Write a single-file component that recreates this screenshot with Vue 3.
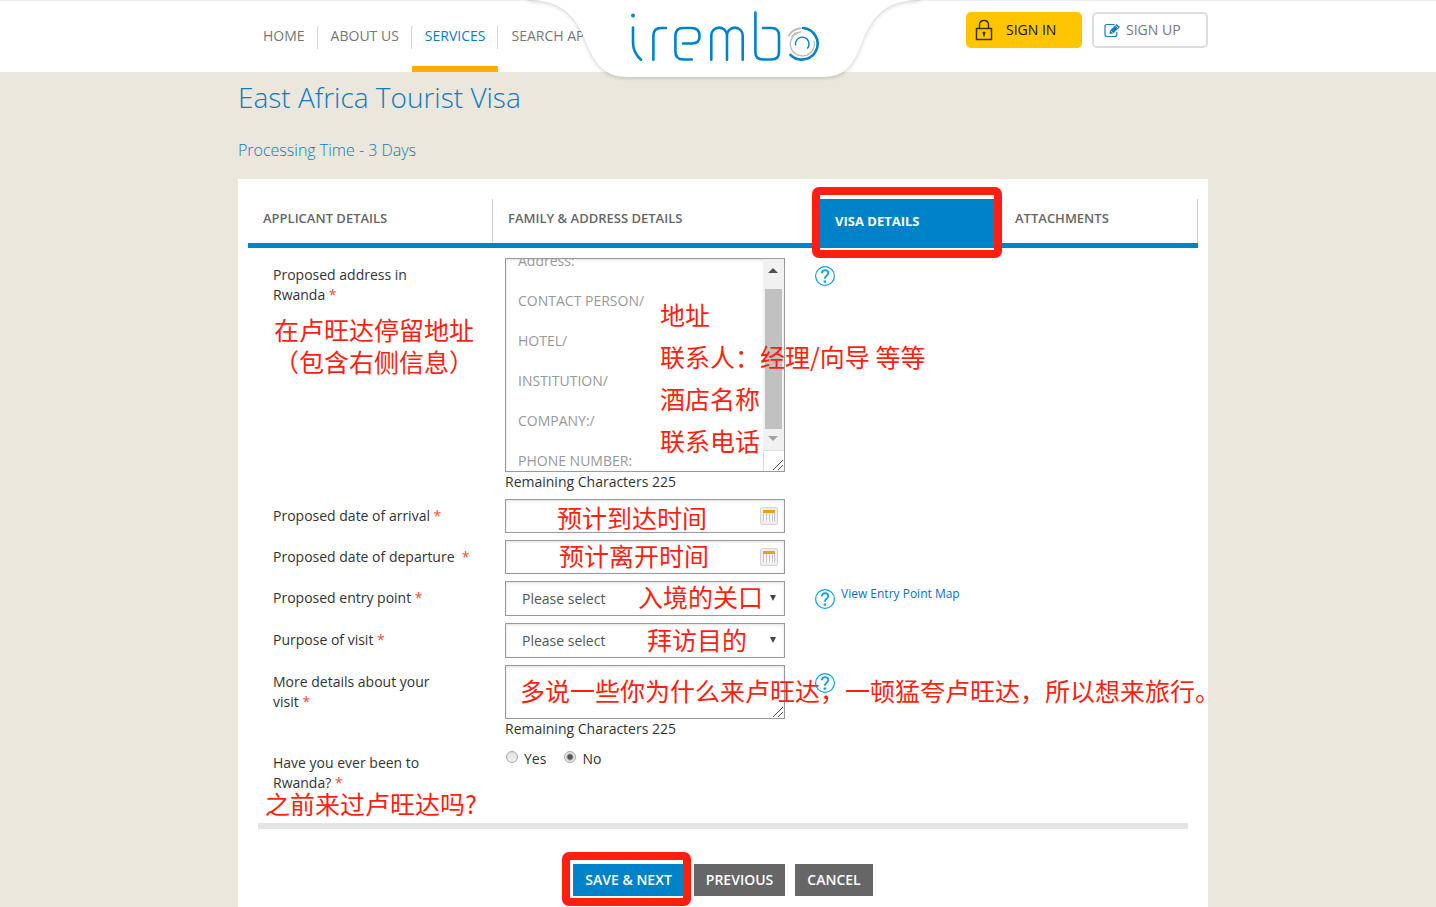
<script setup>
import { onMounted, ref } from 'vue'

const address = ref('Address:\n\nCONTACT PERSON/\n\nHOTEL/\n\nINSTITUTION/\n\nCOMPANY:/\n\nPHONE NUMBER:')
const addressBox = ref(null)
const arrival = ref('')
const departure = ref('')
const entryPoint = ref('')
const purpose = ref('')
const details = ref('')
const visited = ref('no')

onMounted(() => {
  addressBox.value.scrollTop = 14
})
</script>

<template>
  <div class="page">
    <header class="header">
      <div class="container header-row">
        <nav class="nav">
          <a href="#">HOME</a>
          <a href="#">ABOUT US</a>
          <a href="#" class="current">SERVICES</a>
          <a href="#">SEARCH AP</a>
        </nav>
        <a href="#" class="logo" aria-label="irembo">
          <svg width="410" height="86" viewBox="0 0 410 86" fill="none">
            <path class="logo-plate" d="M8 -8 V0 C40 0 55 14 66 42 C75 64 84 77 108 77 H302 C326 77 334 64 342 42 C353 14 368 0 400 0 V-8 Z" fill="#fff" />
            <g stroke="#0082c8" stroke-width="2.6" stroke-linecap="round">
              <circle cx="113" cy="15.4" r="2" fill="#0082c8" stroke="none" />
              <path d="M113 27.5 V42 Q113 53 121 59.7" />
              <path d="M133.4 59.7 V36 Q133.4 28 141 28 H146" />
              <path d="M163 43.5 H172 Q179.6 43.5 179.6 36 Q179.6 28 171.5 28 H163 Q155.4 28 155.4 36 V51.5 Q155.4 59.5 163.4 59.5 H171.8" />
              <path d="M191.3 59.7 V35.5 A7.8 7.8 0 0 1 207 35.5 V59.7 M207 35.5 A7.8 7.8 0 0 1 222.7 35.5 V59.7" />
              <path d="M235.4 12.5 V52 Q235.4 59.5 243 59.5 H251.5 Q259 59.5 259 52 V35.5 Q259 28 251.5 28 H243" />
              <path d="M283 28 A15.8 15.8 0 1 1 270.5 54.8" />
            </g>
            <path d="M268.5 36 A15.6 15.6 0 0 1 281 28.2" stroke="#b9bbbd" stroke-width="2" />
            <path d="M281 32 A12 12 0 1 0 294 41" stroke="#b9bbbd" stroke-width="1.3" />
            <path d="M271 37 A14 14 0 0 1 277 32" stroke="#b9bbbd" stroke-width="1" />
            <path d="M275.6 45.5 A6.8 6.8 0 1 1 287.3 48.6" stroke="#0082c8" stroke-width="1.3" />
          </svg>
        </a>
        <div class="account">
          <button type="button" class="sign-in">
            <svg width="18" height="22" viewBox="0 0 18 22" fill="none" stroke="#3b3210" stroke-width="1.5">
              <rect x="1.5" y="9.5" width="15" height="11" />
              <path d="M4.5 9.5 V6 Q4.5 1.5 9 1.5 Q13.5 1.5 13.5 6 V9.5" />
              <circle cx="9" cy="14" r="1.5" fill="#3b3210" stroke="none" />
              <path d="M9 14 V17.5" />
            </svg>
            <span>SIGN IN</span>
          </button>
          <button type="button" class="sign-up">
            <svg width="17" height="15" viewBox="0 0 17 15" fill="none" stroke="#1b7fc0" stroke-width="1.2">
              <path d="M10.5 1.5 H3 Q1 1.5 1 3.5 V11.5 Q1 13.5 3 13.5 H10.5 Q12.8 13.5 12.8 11.5 V9" />
              <path d="M6 7.5 L12.5 1 L16 4 L9 10.5 L5.5 11 Z" fill="#1b7fc0" stroke="none" />
              <path d="M7.2 8.3 L8.6 9.6 M11.5 2.7 L14.2 5" stroke="#fff" stroke-width=".8" />
            </svg>
            <span>SIGN UP</span>
          </button>
        </div>
      </div>
    </header>

    <main class="container main">
      <h1>East Africa Tourist Visa</h1>
      <p class="processing">Processing Time - 3 Days</p>

      <section class="card">
        <nav class="tabs">
          <a href="#" class="tab ruled">APPLICANT DETAILS</a>
          <a href="#" class="tab">FAMILY &amp; ADDRESS DETAILS</a>
          <a href="#" class="tab active">VISA DETAILS<i class="frame tab-frame"></i></a>
          <a href="#" class="tab ruled">ATTACHMENTS</a>
        </nav>

        <form @submit.prevent>
          <div class="row">
            <div class="caption">
              <label for="address">Proposed address in Rwanda&nbsp;<b>*</b></label>
              <p class="note note-address">在卢旺达停留地址<br>（包含右侧信息）</p>
            </div>
            <div class="field">
              <div class="area">
                <textarea id="address" ref="addressBox" v-model="address" class="control tall"></textarea>
                <div class="scrollbar">
                  <svg width="20" height="30" viewBox="0 0 20 30"><path d="M5 14 L10 9 L15 14 Z" fill="#505050" /></svg>
                  <div class="thumb"></div>
                  <svg width="20" height="21" viewBox="0 0 20 21"><path d="M5 7 L10 12 L15 7 Z" fill="#a3a3a3" /></svg>
                  <div class="corner"></div>
                </div>
                <svg class="grip" width="12" height="12" viewBox="0 0 12 12" stroke="#555" fill="none"><path d="M1 11 L11 1 M6 11 L11 6" /></svg>
              </div>
              <div class="remaining">Remaining Characters 225</div>
              <ul class="note note-list">
                <li>地址</li>
                <li>联系人：经理/向导 等等</li>
                <li>酒店名称</li>
                <li>联系电话</li>
              </ul>
            </div>
            <div class="aside">
              <button type="button" class="help" aria-label="Help"><svg width="20" height="20" viewBox="0 0 20 20" fill="none" stroke="#0d9fdb"><circle cx="10" cy="10" r="9.400" stroke-width="1.200" /><path d="M6.800 7.200 Q7 4.200 10 4.200 Q13.400 4.300 13.200 7.200 Q13.100 8.700 11.300 9.900 Q9.900 10.800 9.900 12.700" stroke-width="1.800" /><path d="M8.600 15.600 H11.200" stroke-width="2.200" /></svg></button>
            </div>
          </div>

          <div class="row">
            <div class="caption"><label for="arrival">Proposed date of arrival&nbsp;<b>*</b></label></div>
            <div class="field">
              <input id="arrival" v-model="arrival" type="text" class="control date">
              <button type="button" class="calendar" aria-label="Pick arrival date"><svg width="18" height="18" viewBox="0 0 18 18"><rect x=".5" y=".5" width="17" height="17" rx="1.500" fill="#eeeeee" stroke="#d5d5d5" /><rect x="3" y="3" width="12" height="3" fill="#eba019" /><path d="M4 6.500 V14.500 M6.500 6.500 V14.500 M9 6.500 V14.500 M11.500 6.500 V14.500 M14 6.500 V14.500" stroke="#fff" stroke-width="2" /><path d="M3.500 6 V14.500 M6.500 6 V14.500 M9.500 6 V14.500 M12.500 6 V14.500 M14.500 6 V14.500" stroke="#c4c6c9" /></svg></button>
              <p class="note note-arrival">预计到达时间</p>
            </div>
          </div>

          <div class="row">
            <div class="caption single-line"><label for="departure">Proposed date of departure&nbsp; <b>*</b></label></div>
            <div class="field">
              <input id="departure" v-model="departure" type="text" class="control date">
              <button type="button" class="calendar" aria-label="Pick departure date"><svg width="18" height="18" viewBox="0 0 18 18"><rect x=".5" y=".5" width="17" height="17" rx="1.500" fill="#eeeeee" stroke="#d5d5d5" /><rect x="3" y="3" width="12" height="3" fill="#eba019" /><path d="M4 6.500 V14.500 M6.500 6.500 V14.500 M9 6.500 V14.500 M11.500 6.500 V14.500 M14 6.500 V14.500" stroke="#fff" stroke-width="2" /><path d="M3.500 6 V14.500 M6.500 6 V14.500 M9.500 6 V14.500 M12.500 6 V14.500 M14.500 6 V14.500" stroke="#c4c6c9" /></svg></button>
              <p class="note note-departure">预计离开时间</p>
            </div>
          </div>

          <div class="row">
            <div class="caption"><label for="entry">Proposed entry point&nbsp;<b>*</b></label></div>
            <div class="field">
              <select id="entry" v-model="entryPoint" class="control">
                <option value="">Please select</option>
              </select>
              <svg class="caret" width="6" height="6" viewBox="0 0 6 6"><path d="M0 0 H6 L3 6 Z" fill="#444" /></svg>
              <p class="note note-entry">入境的关口</p>
            </div>
            <div class="aside">
              <button type="button" class="help" aria-label="Help"><svg width="20" height="20" viewBox="0 0 20 20" fill="none" stroke="#0d9fdb"><circle cx="10" cy="10" r="9.400" stroke-width="1.200" /><path d="M6.800 7.200 Q7 4.200 10 4.200 Q13.400 4.300 13.200 7.200 Q13.100 8.700 11.300 9.900 Q9.900 10.800 9.900 12.700" stroke-width="1.800" /><path d="M8.600 15.600 H11.200" stroke-width="2.200" /></svg></button>
              <a href="#" class="map-link">View Entry Point Map</a>
            </div>
          </div>

          <div class="row">
            <div class="caption"><label for="purpose">Purpose of visit&nbsp;<b>*</b></label></div>
            <div class="field">
              <select id="purpose" v-model="purpose" class="control">
                <option value="">Please select</option>
              </select>
              <svg class="caret" width="6" height="6" viewBox="0 0 6 6"><path d="M0 0 H6 L3 6 Z" fill="#444" /></svg>
              <p class="note note-purpose">拜访目的</p>
            </div>
          </div>

          <div class="row">
            <div class="caption"><label for="details">More details about your visit&nbsp;<b>*</b></label></div>
            <div class="field">
              <div class="area">
                <textarea id="details" v-model="details" class="control short"></textarea>
                <svg class="grip" width="12" height="12" viewBox="0 0 12 12" stroke="#555" fill="none"><path d="M1 11 L11 1 M6 11 L11 6" /></svg>
              </div>
              <div class="remaining">Remaining Characters 225</div>
              <p class="note note-details">多说一些你为什么来卢旺达，一顿猛夸卢旺达，所以想来旅行。</p>
            </div>
            <div class="aside">
              <button type="button" class="help" aria-label="Help"><svg width="20" height="20" viewBox="0 0 20 20" fill="none" stroke="#0d9fdb"><circle cx="10" cy="10" r="9.400" stroke-width="1.200" /><path d="M6.800 7.200 Q7 4.200 10 4.200 Q13.400 4.300 13.200 7.200 Q13.100 8.700 11.300 9.900 Q9.900 10.800 9.900 12.700" stroke-width="1.800" /><path d="M8.600 15.600 H11.200" stroke-width="2.200" /></svg></button>
            </div>
          </div>

          <div class="row">
            <div class="caption">
              <span id="visited">Have you ever been to Rwanda?&nbsp;<b>*</b></span>
              <p class="note note-visited">之前来过卢旺达吗?</p>
            </div>
            <div class="field radios" role="radiogroup" aria-labelledby="visited">
              <label><input v-model="visited" type="radio" name="visited" value="yes">Yes</label>
              <label><input v-model="visited" type="radio" name="visited" value="no">No</label>
            </div>
          </div>

          <hr>

          <div class="actions">
            <button type="submit" class="primary">SAVE &amp; NEXT<i class="frame save-frame"></i></button>
            <button type="button">PREVIOUS</button>
            <button type="button">CANCEL</button>
          </div>
        </form>
      </section>
    </main>
  </div>
</template>

<style>
body {
  background: #ebe7dc;
}
</style>

<style scoped>
.page {
  min-height: 100vh;
  display: flex;
  flex-direction: column;
  font: 14px/20px "Open Sans", "Noto Sans CJK SC", sans-serif;
  color: #333;
}
.page *,
.page {
  box-sizing: border-box;
}
.page button,
.page input,
.page select,
.page textarea {
  font: inherit;
  margin: 0;
}
a {
  text-decoration: none;
}
.header {
  background: #fff;
  border-top: 1px solid #eee;
  padding-left: 10px;
}
.container {
  width: 100%;
  max-width: 970px;
  margin: 0 auto;
}
.header-row {
  position: relative;
  display: flex;
  justify-content: space-between;
  height: 71px;
}
.nav {
  display: flex;
  padding-left: 12px;
}
.nav a {
  position: relative;
  padding: 25px 13px 20px;
  color: #777;
  border-bottom: 6px solid transparent;
}
.nav a:not(:last-child)::after {
  content: "";
  position: absolute;
  right: 0;
  top: 25px;
  width: 1px;
  height: 23px;
  background: #d8d8d8;
}
.nav a.current {
  color: #0a7cc8;
  border-bottom-color: #ffae00;
}
.logo {
  position: absolute;
  left: 50%;
  top: -1px;
  margin-left: -203px;
}
.logo svg {
  display: block;
}
.logo-plate {
  filter: drop-shadow(0 1px 2px rgba(0, 0, 0, 0.2));
}
.account {
  display: flex;
  gap: 10px;
  padding-top: 11px;
}
.account button {
  width: 116px;
  height: 36px;
  display: flex;
  align-items: center;
  border-radius: 5px;
  padding: 0 9px;
}
.account .sign-in {
  background: #ffc600;
  border: 0;
  color: #111;
  gap: 13px;
}
.account .sign-up {
  background: #fff;
  border: 2px solid #ddd;
  color: #777;
  gap: 5px;
  padding: 0 10px;
}
.main {
  flex: 1;
  display: flex;
  flex-direction: column;
  max-width: 980px;
  padding-left: 10px;
}
h1 {
  margin: 5px 0 23px;
  font-size: 28px;
  line-height: 40px;
  font-weight: 300;
  color: #0a7cc0;
}
.processing {
  margin: 0 0 19px;
  font-size: 16px;
  font-weight: 300;
  color: #0a7cc0;
}
.card {
  flex: 1;
  background: #fff;
  padding: 20px 10px 11px;
}
.tabs {
  display: grid;
  grid-template-columns: 245fr 327fr 180fr 198fr;
}
.tab {
  position: relative;
  height: 49px;
  padding: 9px 15px;
  border-bottom: 5px solid #0082c8;
  font-size: 13px;
  font-weight: 600;
  color: #666;
}
.ruled::after {
  content: "";
  position: absolute;
  right: 0;
  top: 0;
  bottom: 0;
  width: 1px;
  background: #ccc;
}
.tab.active {
  padding-top: 12px;
  background: #0082c8;
  color: #fff;
  font-weight: 700;
}
.frame {
  position: absolute;
  z-index: 3;
  border: 8px solid #ff1f11;
  border-radius: 7px;
}
.tab-frame {
  left: -8px;
  right: -2px;
  top: -12px;
  bottom: -15px;
}
.save-frame {
  left: -11px;
  right: -7px;
  top: -12px;
  bottom: -10px;
}
form {
  display: flex;
  flex-direction: column;
  gap: 7px;
  padding-top: 10px;
}
.row {
  display: grid;
  grid-template-columns: 232px 280px 1fr;
  padding-left: 25px;
}
.caption {
  position: relative;
  padding: 7px 50px 0 0;
}
.single-line {
  white-space: nowrap;
}
.caption b {
  font-weight: 400;
  color: #ff4a30;
}
.field {
  position: relative;
}
.area {
  position: relative;
}
.control {
  display: block;
  width: 100%;
  height: 35px;
  border: 1px solid #999;
  border-radius: 0;
  background: #fff;
  box-shadow: inset 0 1px 3px rgba(0, 0, 0, 0.12);
  color: #555;
  outline: 0;
  appearance: none;
  resize: none;
}
.page select.control {
  padding: 0 16px;
}
.control.date {
  height: 34px;
  padding: 0 30px 0 12px;
}
.control.tall {
  height: 214px;
  padding: 6px 30px 6px 12px;
  overflow: hidden;
  color: #999;
}
.control.short {
  height: 54px;
  padding: 6px 12px;
  overflow: hidden;
}
.scrollbar {
  position: absolute;
  top: 1px;
  right: 1px;
  bottom: 1px;
  width: 21px;
  display: flex;
  flex-direction: column;
  background: #f1f1f1;
}
.scrollbar svg {
  display: block;
}
.thumb {
  flex: 1;
  margin: 0 2px;
  background: #c1c1c1;
}
.corner {
  height: 21px;
  background: #fff;
  border: solid #ddd;
  border-width: 1px 0 0 1px;
}
.grip {
  position: absolute;
  right: 1px;
  bottom: 1px;
}
.remaining {
  height: 20px;
}
.calendar {
  position: absolute;
  right: 7px;
  top: 8px;
  padding: 0;
  border: 0;
  background: none;
}
.calendar svg,
.help svg {
  display: block;
}
.caret {
  position: absolute;
  right: 9px;
  top: 14px;
}
.aside {
  display: flex;
  align-items: flex-start;
  gap: 6px;
  padding: 8px 0 0 30px;
}
.help {
  position: relative;
  z-index: 2;
  padding: 0;
  border: 0;
  background: none;
}
.map-link {
  font-size: 12px;
  line-height: 10px;
  color: #0a6fc8;
}
.radios {
  display: flex;
  gap: 17px;
  padding-top: 3px;
}
.radios label {
  display: flex;
  gap: 6px;
  height: 20px;
}
.radios input {
  appearance: none;
  width: 12px;
  height: 12px;
  border: 1px solid #aaa;
  border-radius: 50%;
  background: linear-gradient(#e2e2e2, #f0f0f0);
}
.page .radios input {
  margin: 2px 0 0 1px;
}
.radios input:checked {
  background: radial-gradient(circle, #555 2px, #e8e8e8 4px);
}
.note {
  position: absolute;
  z-index: 1;
  margin: 0;
  padding: 0;
  font: 25px/32px "Noto Sans CJK SC", sans-serif;
  color: #ff1f11;
  white-space: nowrap;
  pointer-events: none;
}
.note-address {
  left: 1px;
  top: 55px;
}
.note-list {
  left: 155px;
  top: 35px;
  line-height: 42px;
  list-style: none;
}
.note-arrival {
  left: 52px;
  top: 2px;
}
.note-departure {
  left: 54px;
  top: -1px;
}
.note-entry {
  left: 133px;
  top: -1px;
}
.note-purpose {
  left: 142px;
  top: 0;
}
.note-details {
  left: 15px;
  top: 9px;
}
.note-visited {
  left: -8px;
  top: 44px;
  line-height: 26px;
}
hr {
  width: auto;
  height: 6px;
  margin: 23px 10px 0;
  border: 0;
  background: #e5e5e5;
}
.actions {
  display: flex;
  justify-content: center;
  gap: 10px;
  padding-top: 28px;
}
.actions button {
  position: relative;
  height: 32px;
  padding: 0 12px;
  border: 0;
  background: #666;
  color: #fff;
  font-weight: 600;
}
.actions .primary {
  background: #0082c8;
}
</style>
